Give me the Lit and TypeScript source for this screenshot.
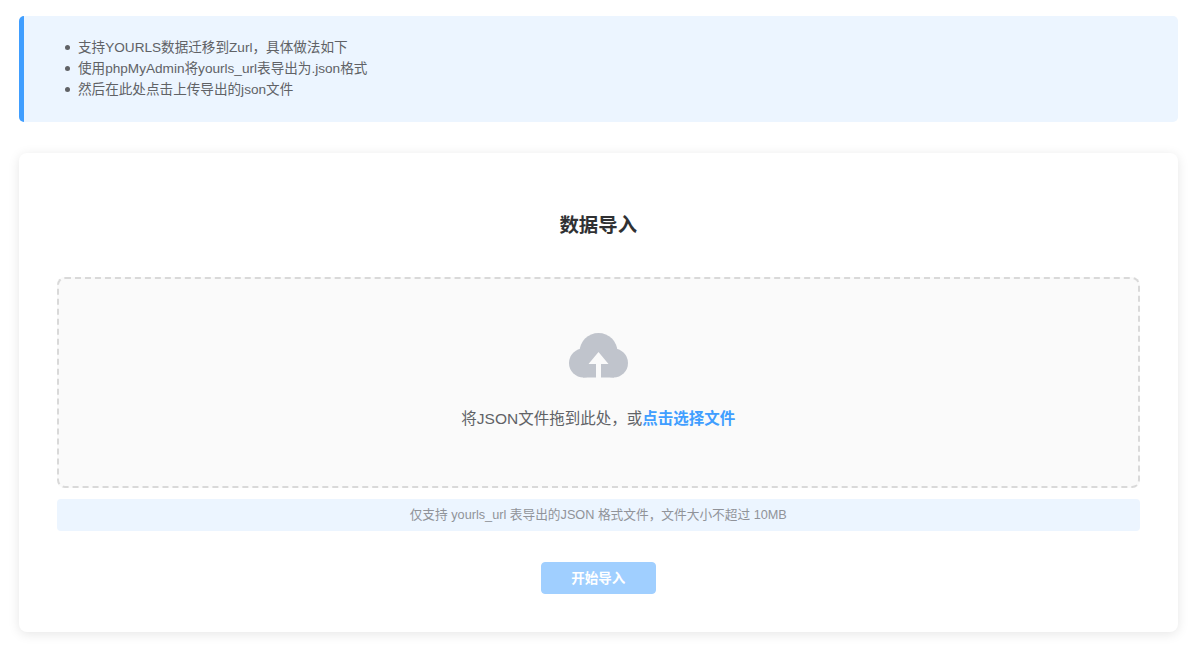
import { LitElement, html, css } from "lit";
import { customElement } from "lit/decorators.js";

@customElement("app-root")
export class AppRoot extends LitElement {
  static styles = css`
    :host {
      display: block;
      box-sizing: border-box;
      padding: 15.5px 22px 23px 18.5px;
      background: #fff;
      font-family: "Liberation Sans", "Noto Sans CJK SC", sans-serif;
      color: #606266;
    }
    .alert {
      box-sizing: border-box;
      height: 106.5px;
      background: #ecf5ff;
      border-left: 5px solid #409eff;
      border-radius: 5px;
      padding: 21px 0 0 0;
    }
    .alert ul {
      margin: 0;
      padding: 0 0 0 54.5px;
      font-size: 13.6px;
      line-height: 21px;
      list-style: none;
    }
    .alert li {
      position: relative;
    }
    .alert li::before {
      content: "";
      position: absolute;
      left: -13.5px;
      top: 8px;
      width: 5px;
      height: 5px;
      border-radius: 50%;
      background: #606266;
    }
    .card {
      box-sizing: border-box;
      margin-top: 31px;
      height: 479px;
      background: #fff;
      border-radius: 8px;
      box-shadow: 0 2px 12px rgba(0, 0, 0, 0.1);
      padding: 57.5px 38.5px 0 38.5px;
      display: flex;
      flex-direction: column;
    }
    h2 {
      margin: 0 0 38.5px;
      font-size: 19.4px;
      line-height: 28px;
      font-weight: 700;
      text-align: center;
      color: #303133;
    }
    .drop {
      box-sizing: border-box;
      height: 211px;
      background: #fafafa;
      border: 2px dashed #d9d9d9;
      border-radius: 8px;
      padding-top: 54px;
      display: flex;
      flex-direction: column;
      align-items: center;
    }
    .drop svg {
      display: block;
      width: 59px;
      height: 45px;
    }
    .drop p {
      margin: 30px 0 0;
      font-size: 15.5px;
      line-height: 22px;
      color: #606266;
    }
    .drop b {
      font-weight: 700;
      color: #409eff;
    }
    .tip {
      box-sizing: border-box;
      margin-top: 11px;
      height: 32px;
      padding-top: 1px;
      line-height: 31px;
      background: #ecf5ff;
      border-radius: 4px;
      text-align: center;
      font-size: 12.7px;
      color: #909399;
    }
    .actions {
      margin-top: 31px;
      display: flex;
      justify-content: center;
    }
    button {
      width: 114.5px;
      height: 32px;
      padding: 0 0 2px;
      border: 1px solid #a0cfff;
      border-radius: 4px;
      background: #a0cfff;
      color: #fff;
      font: 700 13.5px "Liberation Sans", "Noto Sans CJK SC", sans-serif;
    }
  `;

  render() {
    return html`
      <div class="alert">
        <ul>
          <li>支持YOURLS数据迁移到Zurl，具体做法如下</li>
          <li>使用phpMyAdmin将yourls_url表导出为.json格式</li>
          <li>然后在此处点击上传导出的json文件</li>
        </ul>
      </div>
      <div class="card">
        <h2>数据导入</h2>
        <div class="drop">
          <svg viewBox="0 0 59 45" aria-hidden="true">
            <g fill="#c0c4cc">
              <circle cx="29.5" cy="19" r="19"></circle>
              <circle cx="14.5" cy="30" r="14.5"></circle>
              <circle cx="44.5" cy="30" r="14.5"></circle>
              <rect x="14" y="28" width="31" height="16.5"></rect>
            </g>
            <path d="M29.5 19 L39.5 31 L32 31 L32 45 L27 45 L27 31 L19.5 31 Z" fill="#fafafa"></path>
          </svg>
          <p>将JSON文件拖到此处，或<b>点击选择文件</b></p>
        </div>
        <div class="tip">仅支持 yourls_url 表导出的JSON 格式文件，文件大小不超过 10MB</div>
        <div class="actions"><button disabled>开始导入</button></div>
      </div>
    `;
  }
}
